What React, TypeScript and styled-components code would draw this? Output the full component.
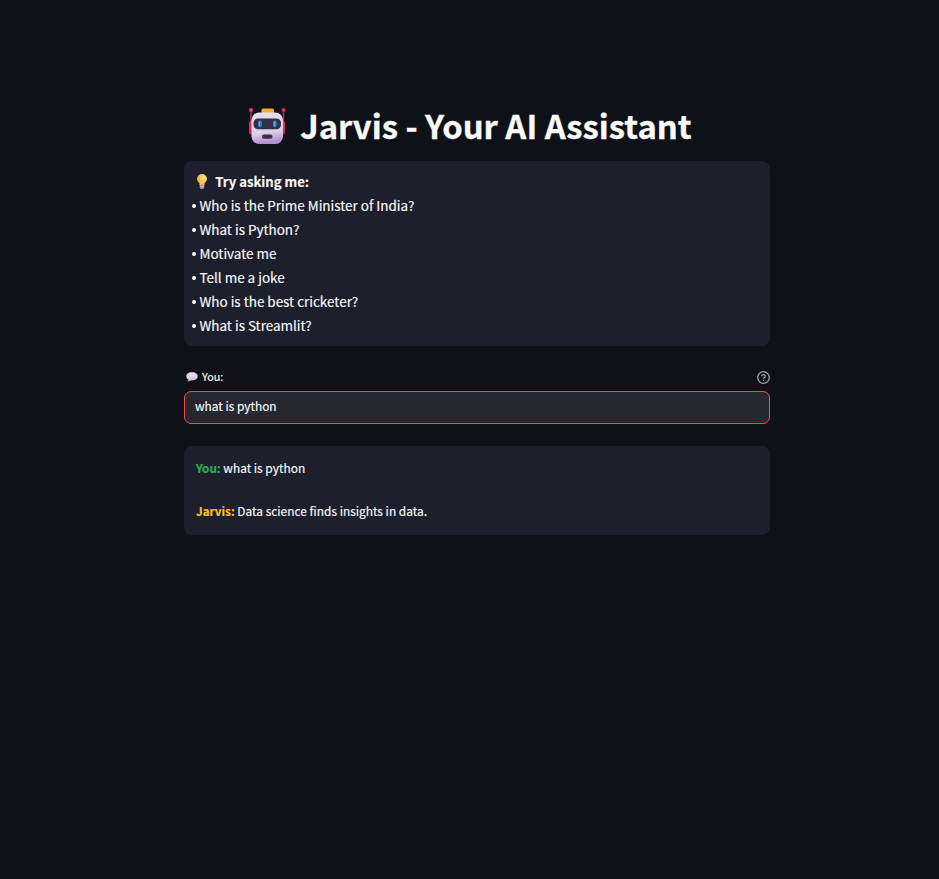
import React from "react";
import styled, { createGlobalStyle } from "styled-components";

const GlobalStyle = createGlobalStyle`
  * { box-sizing: border-box; }
  body {
    margin: 0;
    background: #0e1117;
    color: #fafafa;
    font-family: "Noto Sans CJK SC", "Noto Sans", sans-serif;
    -webkit-text-stroke: 0.15px;
  }
`;

const Page = styled.main`
  min-height: 879px;
  padding: 102px 169px 0 184px;
  background: #0e1117;
`;

const Title = styled.h1`
  display: flex;
  align-items: center;
  height: 46px;
  margin: 0 0 13px 64px;
  font-size: 32.85px;
  line-height: 46px;
  font-weight: 700;
  white-space: nowrap;
  -webkit-text-stroke: 0.3px;

  svg { flex: none; margin: 2px 14px 0 0; }
`;

const Panel = styled.section`
  border-radius: 8px;
  background: #1e1f2d;
`;

const Suggestions = styled(Panel)`
  height: 185px;
  padding: 8px 8px;
  font-size: 13.46px;
  line-height: 24px;
`;

const SuggestionsHeading = styled.div`
  display: flex;
  align-items: center;
  height: 24px;
  padding: 2px 0 0 4px;
  font-size: 13.1px;
  font-weight: 700;

  svg { margin: 0 7.3px 0 0; }
`;

const SuggestionList = styled.ul`
  margin: 0;
  padding: 0;
  list-style: none;
`;

const Suggestion = styled.li`
  display: flex;
  align-items: center;
  height: 24px;
  white-space: nowrap;

  &::before {
    content: "";
    width: 4px;
    height: 4px;
    margin: 2px 3.5px 0 0;
    border-radius: 50%;
    background: #fafafa;
  }
`;

const FieldLabel = styled.label`
  display: flex;
  align-items: center;
  height: 20px;
  margin-top: 20px;
  padding-left: 2px;
  font-size: 10.8px;
  line-height: 20px;

  svg:first-child { margin: 1px 4px 0 0; }
  svg:last-child { margin: 2px 0 0 auto; }
`;

const Field = styled.input`
  display: block;
  width: 100%;
  height: 33px;
  margin: 5px 0 22px;
  padding: 0 10px 4px;
  border: 1px solid #ff4b4b;
  border-radius: 7px;
  outline: none;
  background: #262730;
  color: #fafafa;
  font: inherit;
  font-size: 11.9px;
`;

const Conversation = styled(Panel)`
  height: 89px;
  padding: 11px 12px;
  font-size: 11.93px;
  line-height: 22px;
`;

const Message = styled.p`
  margin: 0 0 21px;
  white-space: nowrap;
`;

const Speaker = styled.strong<{ $color: string }>`
  color: ${(p) => p.$color};
  font-weight: 700;
  font-size: 11.7px;
`;

const RobotIcon = () => (
  <svg width="38" height="38" viewBox="0 0 38 38" aria-hidden="true">
    <defs>
      <linearGradient id="face" x1="0" y1="0" x2="0.15" y2="1">
        <stop offset="0" stopColor="#e8dfee" />
        <stop offset="0.7" stopColor="#dccfe4" />
        <stop offset="1" stopColor="#b48fd2" />
      </linearGradient>
      <linearGradient id="ear" x1="0" y1="0" x2="0" y2="1">
        <stop offset="0" stopColor="#f4365e" />
        <stop offset="1" stopColor="#c92254" />
      </linearGradient>
    </defs>
    <path d="M3 3V17M35.500 3V17" stroke="#b52c50" strokeWidth="1.500" />
    <circle cx="3" cy="3" r="2" fill="#f23d61" />
    <circle cx="35.500" cy="3" r="2" fill="#d92c54" />
    <rect x="1" y="14" width="5" height="13.500" rx="2" fill="url(#ear)" />
    <rect x="32" y="14" width="5" height="13.500" rx="2" fill="url(#ear)" />
    <rect x="13.500" y="1.500" width="12.500" height="6" rx="1.800" fill="#f4ad2e" />
    <rect x="3.500" y="5.500" width="31.500" height="31.500" rx="7.500" fill="url(#face)" />
    <rect x="5.500" y="11.500" width="27.500" height="10.700" rx="4.500" fill="#353047" />
    <rect x="10.200" y="13.500" width="3.600" height="6.800" rx="1.700" fill="#278cd2" />
    <rect x="25" y="13.500" width="3.600" height="6.800" rx="1.700" fill="#278cd2" />
    <path d="M11.500 15v4M26.500 15v4" stroke="#50b4ec" strokeWidth="1" />
    <rect x="14" y="27.500" width="10.500" height="4.300" rx="1.800" fill="#3b304b" />
  </svg>
);

const BulbIcon = () => (
  <svg width="12" height="16" viewBox="0 0 12 16" aria-hidden="true">
    <defs>
      <radialGradient id="bulb" cx="0.65" cy="0.3" r="0.7">
        <stop offset="0" stopColor="#ffe681" />
        <stop offset="1" stopColor="#eda637" />
      </radialGradient>
    </defs>
    <path d="M3.700 10h4.600v3.300L7.300 15H4.700l-1-1.700z" fill="#a996b3" />
    <path d="M3.500 11V9.500C2.700 8 1 7.300 1 5a5 5 0 0 1 10 0c0 2.300-1.700 3-2.500 4.500V11z" fill="url(#bulb)" />
    <path d="M5 8v2.500M7 8v2.500" stroke="#fff0a0" strokeWidth=".7" />
    <path d="M4 12.600h4" stroke="#d9cce0" strokeWidth=".7" />
  </svg>
);

const SpeechIcon = () => (
  <svg width="12" height="12" viewBox="0 0 12 12" aria-hidden="true">
    <defs>
      <linearGradient id="speech" x1="0" y1="0" x2="0" y2="1">
        <stop offset="0" stopColor="#f0eaf4" />
        <stop offset="1" stopColor="#cbb9da" />
      </linearGradient>
    </defs>
    <path d="M6 1.200c3.300 0 5.700 1.700 5.700 4S9.300 9.400 6 9.400l-1-.1c-.8.7-2 1.200-3.600 1.100.8-.5 1-1 1-1.800C1.100 7.800.3 6.700.3 5.200c0-2.300 2.400-4 5.700-4z" fill="url(#speech)" />
  </svg>
);

const HelpIcon = () => (
  <svg width="13" height="13" viewBox="1 1 22 22" fill="none" stroke="#a3a4a8" strokeWidth="2.200" strokeLinecap="round" strokeLinejoin="round" aria-hidden="true">
    <circle cx="12" cy="12" r="9.800" />
    <path d="M9.090 9a3 3 0 0 1 5.830 1c0 2-3 3-3 3" />
    <path d="M12 17h.01" />
  </svg>
);

const suggestions = [
  "Who is the Prime Minister of India?",
  "What is Python?",
  "Motivate me",
  "Tell me a joke",
  "Who is the best cricketer?",
  "What is Streamlit?",
];

export default function App() {
  return (
    <>
      <GlobalStyle />
      <Page>
        <Title><RobotIcon />Jarvis - Your AI Assistant</Title>
        <Suggestions>
          <SuggestionsHeading><BulbIcon />Try asking me:</SuggestionsHeading>
          <SuggestionList>
            {suggestions.map((text) => <Suggestion key={text}>{text}</Suggestion>)}
          </SuggestionList>
        </Suggestions>
        <FieldLabel htmlFor="question"><SpeechIcon />You:<HelpIcon /></FieldLabel>
        <Field id="question" defaultValue="what is python" />
        <Conversation>
          <Message><Speaker $color="#22b455">You:</Speaker> what is python</Message>
          <Message><Speaker $color="#fbc41c">Jarvis:</Speaker> Data science finds insights in data.</Message>
        </Conversation>
      </Page>
    </>
  );
}
